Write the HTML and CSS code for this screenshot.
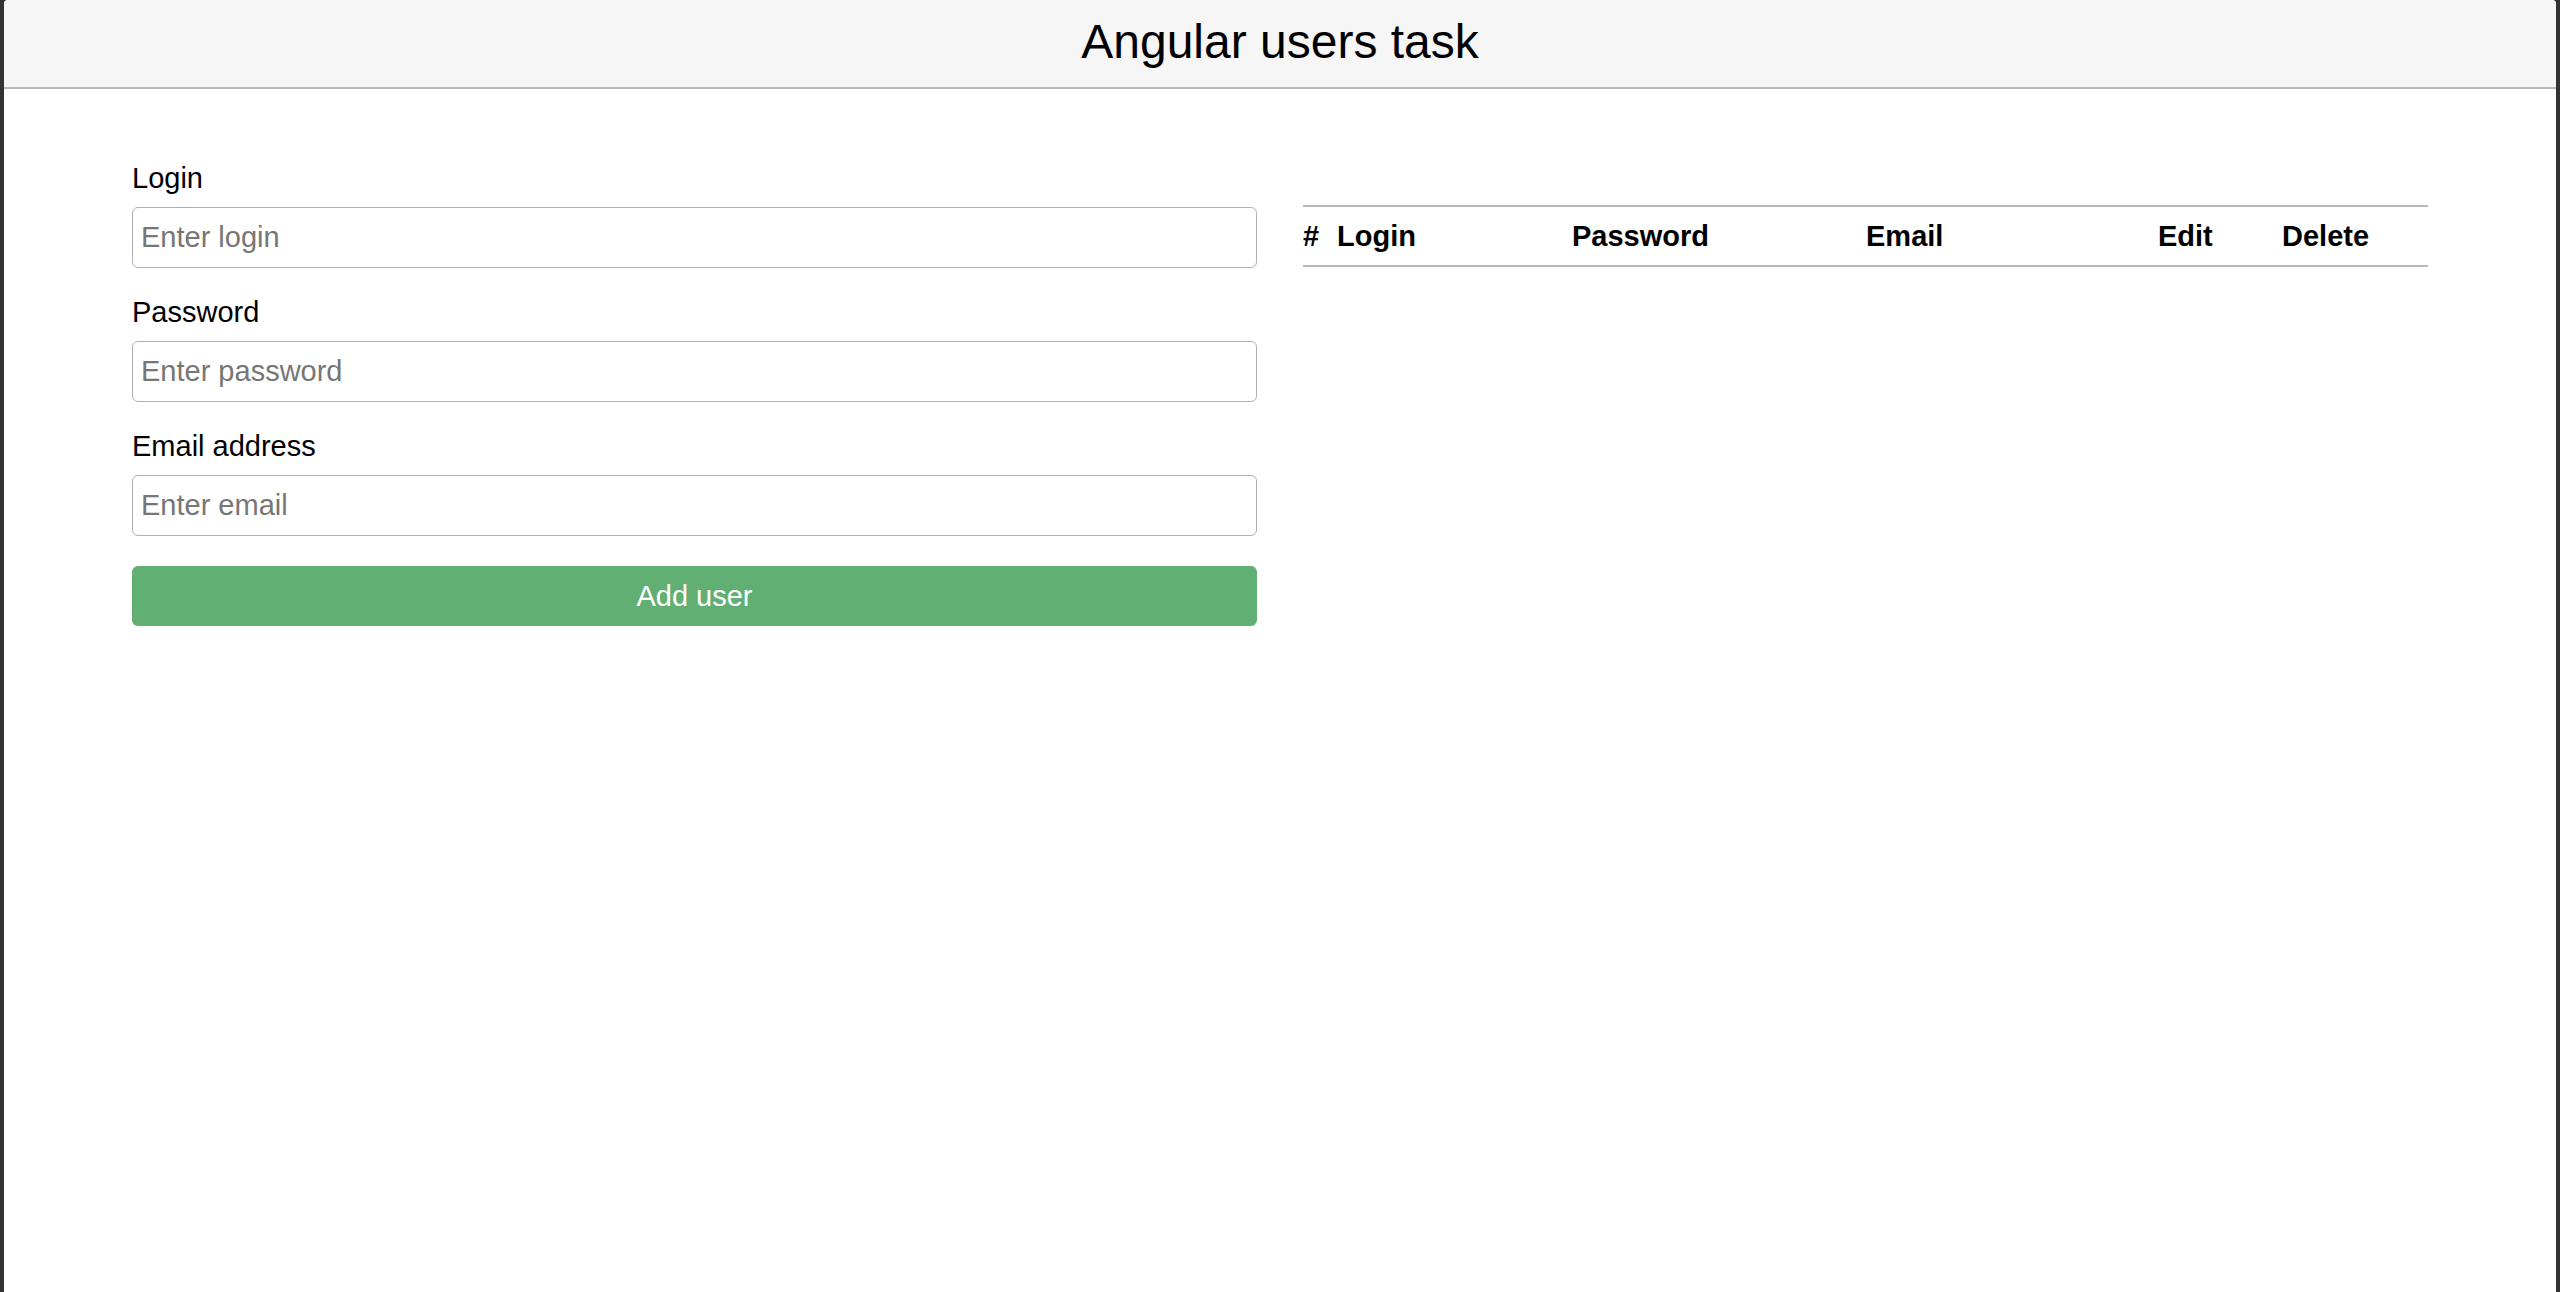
FILE: index.html
```html
<!DOCTYPE html>
<html lang="en">
<head>
<meta charset="utf-8">
<title>Angular users task</title>
<link rel="stylesheet" href="styles.css">
</head>
<body>
<div class="app">
  <header class="topbar">
    <h1 class="title">Angular users task</h1>
  </header>
  <main class="content">
    <form class="user-form" onsubmit="return false">
      <div class="field">
        <label class="label" for="login">Login</label>
        <input class="input" id="login" type="text" placeholder="Enter login">
      </div>
      <div class="field">
        <label class="label" for="password">Password</label>
        <input class="input" id="password" type="password" placeholder="Enter password">
      </div>
      <div class="field">
        <label class="label" for="email">Email address</label>
        <input class="input" id="email" type="email" placeholder="Enter email">
      </div>
      <button class="btn-add" type="submit">Add user</button>
    </form>
    <section class="users">
      <div class="table-head">
        <div class="th">#</div>
        <div class="th">Login</div>
        <div class="th">Password</div>
        <div class="th">Email</div>
        <div class="th">Edit</div>
        <div class="th">Delete</div>
      </div>
    </section>
  </main>
</div>
</body>
</html>
```

FILE: styles.css
```css
html, body {
  margin: 0;
  padding: 0;
  height: 100%;
}

body {
  background: #333333;
  font-family: "Liberation Sans", Arial, sans-serif;
  color: #000;
}

.app {
  margin: 0 4px;
  min-height: 100vh;
  background: #ffffff;
  border-radius: 4px 4px 0 0;
  overflow: hidden;
}

.topbar {
  background: #f6f6f6;
  border-bottom: 2px solid #b8b8b8;
  padding: 14px 0 18px;
  text-align: center;
}

.title {
  margin: 0;
  font-size: 48px;
  font-weight: 400;
  line-height: normal;
}

.content {
  display: grid;
  grid-template-columns: 1fr 1fr;
  column-gap: 46px;
  padding: 68px 128px 0;
  align-items: start;
}

.user-form {
  display: flex;
  flex-direction: column;
}

.field {
  display: flex;
  flex-direction: column;
  margin-bottom: 23px;
}

.label {
  font-size: 29px;
  line-height: 43px;
  margin-bottom: 7px;
}

.input {
  box-sizing: border-box;
  height: 61px;
  padding: 0 8px;
  border: 1.5px solid #b0b0b0;
  border-radius: 6px;
  font-family: inherit;
  font-size: 29px;
  color: #000;
  background: #fff;
  outline: none;
}

.input::placeholder {
  color: #767676;
}

.btn-add {
  margin-top: 7px;
  height: 60px;
  border: none;
  border-radius: 6px;
  background: #62af74;
  color: #ffffff;
  font-family: inherit;
  font-size: 29px;
  cursor: pointer;
}

.users {
  margin-top: 48px;
}

.table-head {
  display: grid;
  grid-template-columns: 34px 235px 294px 292px 124px 146px;
  height: 62px;
  align-items: center;
  border-top: 2px solid #b8b8b8;
  border-bottom: 2px solid #b8b8b8;
  box-sizing: border-box;
}

.th {
  font-size: 29px;
  font-weight: 700;
}
```
